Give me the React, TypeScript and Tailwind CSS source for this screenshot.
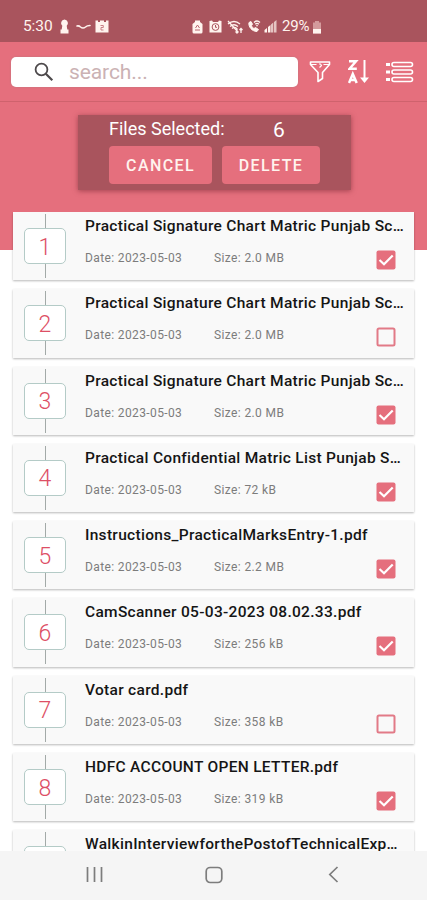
import React from "react";

type FileItem = {
  name: string;
  size: string;
  checked: boolean;
};

const files: FileItem[] = [
  { name: "Practical Signature Chart Matric Punjab Sc…", size: "2.0 MB", checked: true },
  { name: "Practical Signature Chart Matric Punjab Sc…", size: "2.0 MB", checked: false },
  { name: "Practical Signature Chart Matric Punjab Sc…", size: "2.0 MB", checked: true },
  { name: "Practical Confidential Matric List Punjab S…", size: "72 kB", checked: true },
  { name: "Instructions_PracticalMarksEntry-1.pdf", size: "2.2 MB", checked: true },
  { name: "CamScanner 05-03-2023 08.02.33.pdf", size: "256 kB", checked: true },
  { name: "Votar card.pdf", size: "358 kB", checked: false },
  { name: "HDFC ACCOUNT OPEN LETTER.pdf", size: "319 kB", checked: true },
  { name: "WalkinInterviewforthePostofTechnicalExp…", size: "", checked: false },
];

const StatusBar = () => (
  <div className="flex h-[42px] items-end bg-[#a9545d] pb-[7px] pl-[23px] text-[#fff3ee]">
    <span className="w-[30px] text-[15.500px] leading-[18px] tracking-[-0.100px]">5:30</span>
    <svg className="mb-[1px] ml-[7px]" width="9" height="15" viewBox="0 0 9 15" fill="currentColor">
      <path d="M4.500 0.500a3.600 3.600 0 0 1 2.200 6.300L7.300 10.500H8.500V14.500H0.500V10.500H1.700L2.300 6.800A3.600 3.600 0 0 1 4.500 0.500Z" />
    </svg>
    <svg className="mb-[5px] ml-[7px]" width="15" height="6" viewBox="0 0 15 6" fill="none" stroke="currentColor" strokeWidth="1.500" strokeLinecap="round">
      <path d="M1 2Q3 1.500 4.500 3Q7 5 9.500 3Q11 1.500 14 1.500" />
    </svg>
    <svg className="mb-[2px] ml-[4px]" width="14" height="13" viewBox="0 0 14 13">
      <path d="M0.500 0.500H3V2H5V0.500H9V2H11V0.500H13.500V12.500H0.500Z" fill="currentColor" />
      <path d="M5.500 5.500H8.300V7.500H6V10H8.500" fill="none" stroke="#c98187" />
    </svg>
    <svg className="mb-[1px] ml-[83px]" width="11" height="14" viewBox="0 0 11 14">
      <path d="M3 0.500H8V2L10.500 4V12A1.500 1.500 0 0 1 9 13.500H2A1.500 1.500 0 0 1 0.500 12V4L3 2Z" fill="currentColor" />
      <path d="M3.500 8L5.500 5L7.500 8M3 10H8" fill="none" stroke="#b9656e" />
    </svg>
    <svg className="mb-[2px] ml-[6px]" width="13" height="13" viewBox="0 0 13 13">
      <path d="M0.500 1L3 0.500L4 2H9L10 0.500L12.500 1V12.500H0.500Z" fill="currentColor" />
      <circle cx="6.500" cy="7" r="3.400" fill="none" stroke="#a9545d" />
      <path d="M6.500 5V7.300H8" fill="none" stroke="#a9545d" />
    </svg>
    <svg className="mb-[1px] ml-[5px]" width="17" height="14" viewBox="0 0 17 14" fill="none" stroke="currentColor" strokeWidth="1.300">
      <path d="M1 4Q7 -1 13 4M3 6.500Q7 3 11 6.500M5 8.500Q8 6 10 9" />
      <path d="M1 1L11 12M10 8.500V13M8.500 11.500L10 13L11.500 11.500M14 13V8.500M12.500 10L14 8.500L15.500 10" />
    </svg>
    <svg className="mb-[2px] ml-[3px]" width="14" height="13" viewBox="0 0 14 13" fill="none" stroke="currentColor">
      <path d="M2 2.500C1 6.500 5 11.500 10 11.500L11.500 9.500L8.500 7.500L7 8.500C5.500 8 4.800 6.500 4.600 5.500L5.500 4.200L4 1.500Z" fill="currentColor" />
      <path d="M7 2.500Q10 -0.500 13 2.500M8.300 4.300Q10 2.500 11.800 4.300" strokeWidth="1.300" />
      <circle cx="10" cy="5.700" r="0.500" />
    </svg>
    <svg className="mb-[2px] ml-[3px]" width="13" height="13" viewBox="0 0 13 13" fill="currentColor">
      <path d="M0.500 12.500V10L3 8V12.500ZM4 12.500V7L6.500 5V12.500Z" />
      <path d="M7 12.500V4.500L9.300 2.500V12.500ZM10 12.500V2L12.500 0V12.500Z" opacity="0.700" />
    </svg>
    <span className="ml-[5px] w-[30px] text-[15px] leading-[18px] tracking-[-0.200px]">29%</span>
    <svg className="mb-[1px]" width="10" height="13" viewBox="0 0 10 13">
      <path d="M3 0H7V1.500H9V12.500H1V1.500H3Z" fill="#d49a9c" />
      <path d="M1 8H9V12.500H1Z" fill="currentColor" />
    </svg>
  </div>
);

const SearchBar = () => (
  <div className="flex h-[60px] items-start border-b border-[#cf626d] pt-[15px] pl-[11px]">
    <div className="flex h-[30px] w-[287px] items-center rounded-[5px] bg-white pl-[23px] shadow-[0_0_1px_1px_rgba(190,120,130,0.35)]">
      <svg className="-mt-[1px]" width="20" height="20" viewBox="0 0 20 20" fill="none" stroke="#4d494b" strokeWidth="1.800">
        <circle cx="7.500" cy="7.500" r="5.900" />
        <path d="M11.800 11.800L18.300 18.300" strokeWidth="2.200" />
      </svg>
      <span className="ml-[15px] text-[21px] leading-[30px] tracking-[-0.100px] text-[#cbb2b4]">search...</span>
    </div>
    <svg className="mt-[4px] ml-[11px]" width="22" height="22" viewBox="0 0 22 22" fill="none" stroke="white" strokeWidth="1.600" strokeLinejoin="round">
      <path d="M1.500 1H20.500V3.500L13.500 11.500V17.500L9 20.500V11.500L1.500 3.500Z" />
      <path d="M2 3.500H7.500M14.500 3.500H20M10 3H11.500L12.500 4.500L10.500 6.500" strokeWidth="1.200" />
    </svg>
    <svg className="mt-[2px] ml-[17px]" width="22" height="25" viewBox="0 0 22 25" fill="none" stroke="white">
      <path d="M1 2.200H8L1.500 9.800H8.800" strokeWidth="2.500" />
      <path d="M1 24L4.800 15L8.700 24M2.500 21H7.200" strokeWidth="2.500" />
      <path d="M16.500 1V21" strokeWidth="2" />
      <path d="M12 18.500H21L16.500 24Z" fill="white" stroke="none" />
    </svg>
    <svg className="mt-[4px] ml-[15px]" width="29" height="22" viewBox="0 0 29 22" fill="none" stroke="white" strokeWidth="1.600">
      <rect x="7" y="1.500" width="20.500" height="4" rx="2" />
      <rect x="7" y="9" width="20.500" height="4" rx="2" />
      <rect x="7" y="16.500" width="20.500" height="4" rx="2" />
      <path d="M1 3.500H5M1 11H5M1 18.500H5" strokeWidth="3" />
    </svg>
  </div>
);

const SelectionPanel = () => (
  <div className="mt-[13px] ml-[78px] h-[75px] w-[273px] bg-[#a9545d] pl-[31px] shadow-[0_1px_5px_rgba(120,40,50,0.6)]">
    <div className="flex h-[31px] items-center text-white">
      <span className="-mt-[3px] w-[164px] text-[18px] leading-[26px]">Files Selected:</span>
      <span className="-mt-[1px] text-[21px] leading-[26px]">6</span>
    </div>
    <div className="flex gap-[10px] text-[16px] font-medium tracking-[1.400px] text-[#fff3ee]">
      <button className="h-[38px] w-[103px] rounded-[4px] bg-[#e56f7d] pt-[2px]">CANCEL</button>
      <button className="h-[38px] w-[98px] rounded-[4px] bg-[#e56f7d] pt-[2px]">DELETE</button>
    </div>
  </div>
);

const Checkbox = ({ checked }: { checked: boolean }) => (
  <svg className="mt-[2px]" width="20" height="20" viewBox="0 0 20 20" fill="none">
    {checked ? (
      <>
        <rect x="0.500" y="0.500" width="19" height="19" rx="2" fill="#e56f7d" />
        <path d="M3.500 10L8 14.300L16.700 5.500" stroke="white" strokeWidth="2.200" />
      </>
    ) : (
      <rect x="1.500" y="1.500" width="17" height="17" rx="1.500" stroke="#e27a87" strokeWidth="2" />
    )}
  </svg>
);

const FileCard = ({ file, index }: { file: FileItem; index: number }) => (
  <div className="flex h-[68.300px] w-[401px] shrink-0 bg-[#f9f9f9] shadow-[0_1px_2px_rgba(0,0,0,0.28)]">
    <div className="ml-[11px] flex w-[42px] flex-col items-center pt-[2px]">
      <div className="h-[14px] w-px bg-[#a3aaa8]" />
      <div className="flex h-[36px] w-[42px] items-center justify-center rounded-[5px] border border-[#b4cbc7] bg-white pt-[2px] text-[23px] leading-none font-light text-[#dd4f65]">
        {index < 8 && index + 1}
      </div>
      <div className="h-[14px] w-px bg-[#a3aaa8]" />
    </div>
    <div className="ml-[19px] flex-1">
      <div className="h-[36px] pt-[3px] text-[15.500px] leading-[22px] font-medium tracking-[0.300px] whitespace-nowrap text-[#151515]">
        {file.name}
      </div>
      {file.size && (
        <div className="flex text-[12px] leading-[20px] tracking-[0.380px] text-[#7c7c7c]">
          <span className="w-[129px]">Date: 2023-05-03</span>
          <span className="w-[162px]">Size: {file.size}</span>
          <Checkbox checked={file.checked} />
        </div>
      )}
    </div>
  </div>
);

const NavBar = () => (
  <div className="flex h-[49px] items-center bg-[#f5f5f5] pl-[86px] text-[#7d7d7d]">
    <svg className="-mt-[2px]" width="17" height="17" viewBox="0 0 17 17" fill="none" stroke="currentColor" strokeWidth="1.700">
      <path d="M1.500 1V16M8.500 1V16M15.500 1V16" />
    </svg>
    <svg className="-mt-[2px] ml-[102px]" width="18" height="18" viewBox="0 0 18 18" fill="none" stroke="currentColor" strokeWidth="1.700">
      <rect x="1.200" y="1.500" width="15.600" height="15" rx="4" />
    </svg>
    <svg className="-mt-[2px] ml-[105px]" width="11" height="17" viewBox="0 0 11 17" fill="none" stroke="currentColor" strokeWidth="1.700">
      <path d="M9.500 1L1.800 8.500L9.500 16" />
    </svg>
  </div>
);

const App = () => {
  return (
    <div className="flex h-[900px] w-[427px] flex-col overflow-hidden bg-white font-['Roboto',sans-serif]">
      <div className="h-[250px] shrink-0 bg-[#e56f7d]">
        <StatusBar />
        <SearchBar />
        <SelectionPanel />
      </div>
      <div className="-mt-[38px] flex h-[639px] shrink-0 flex-col items-center gap-[9px] overflow-hidden">
        {files.map((file, index) => (
          <FileCard key={index} file={file} index={index} />
        ))}
      </div>
      <NavBar />
    </div>
  );
};

export default App;
